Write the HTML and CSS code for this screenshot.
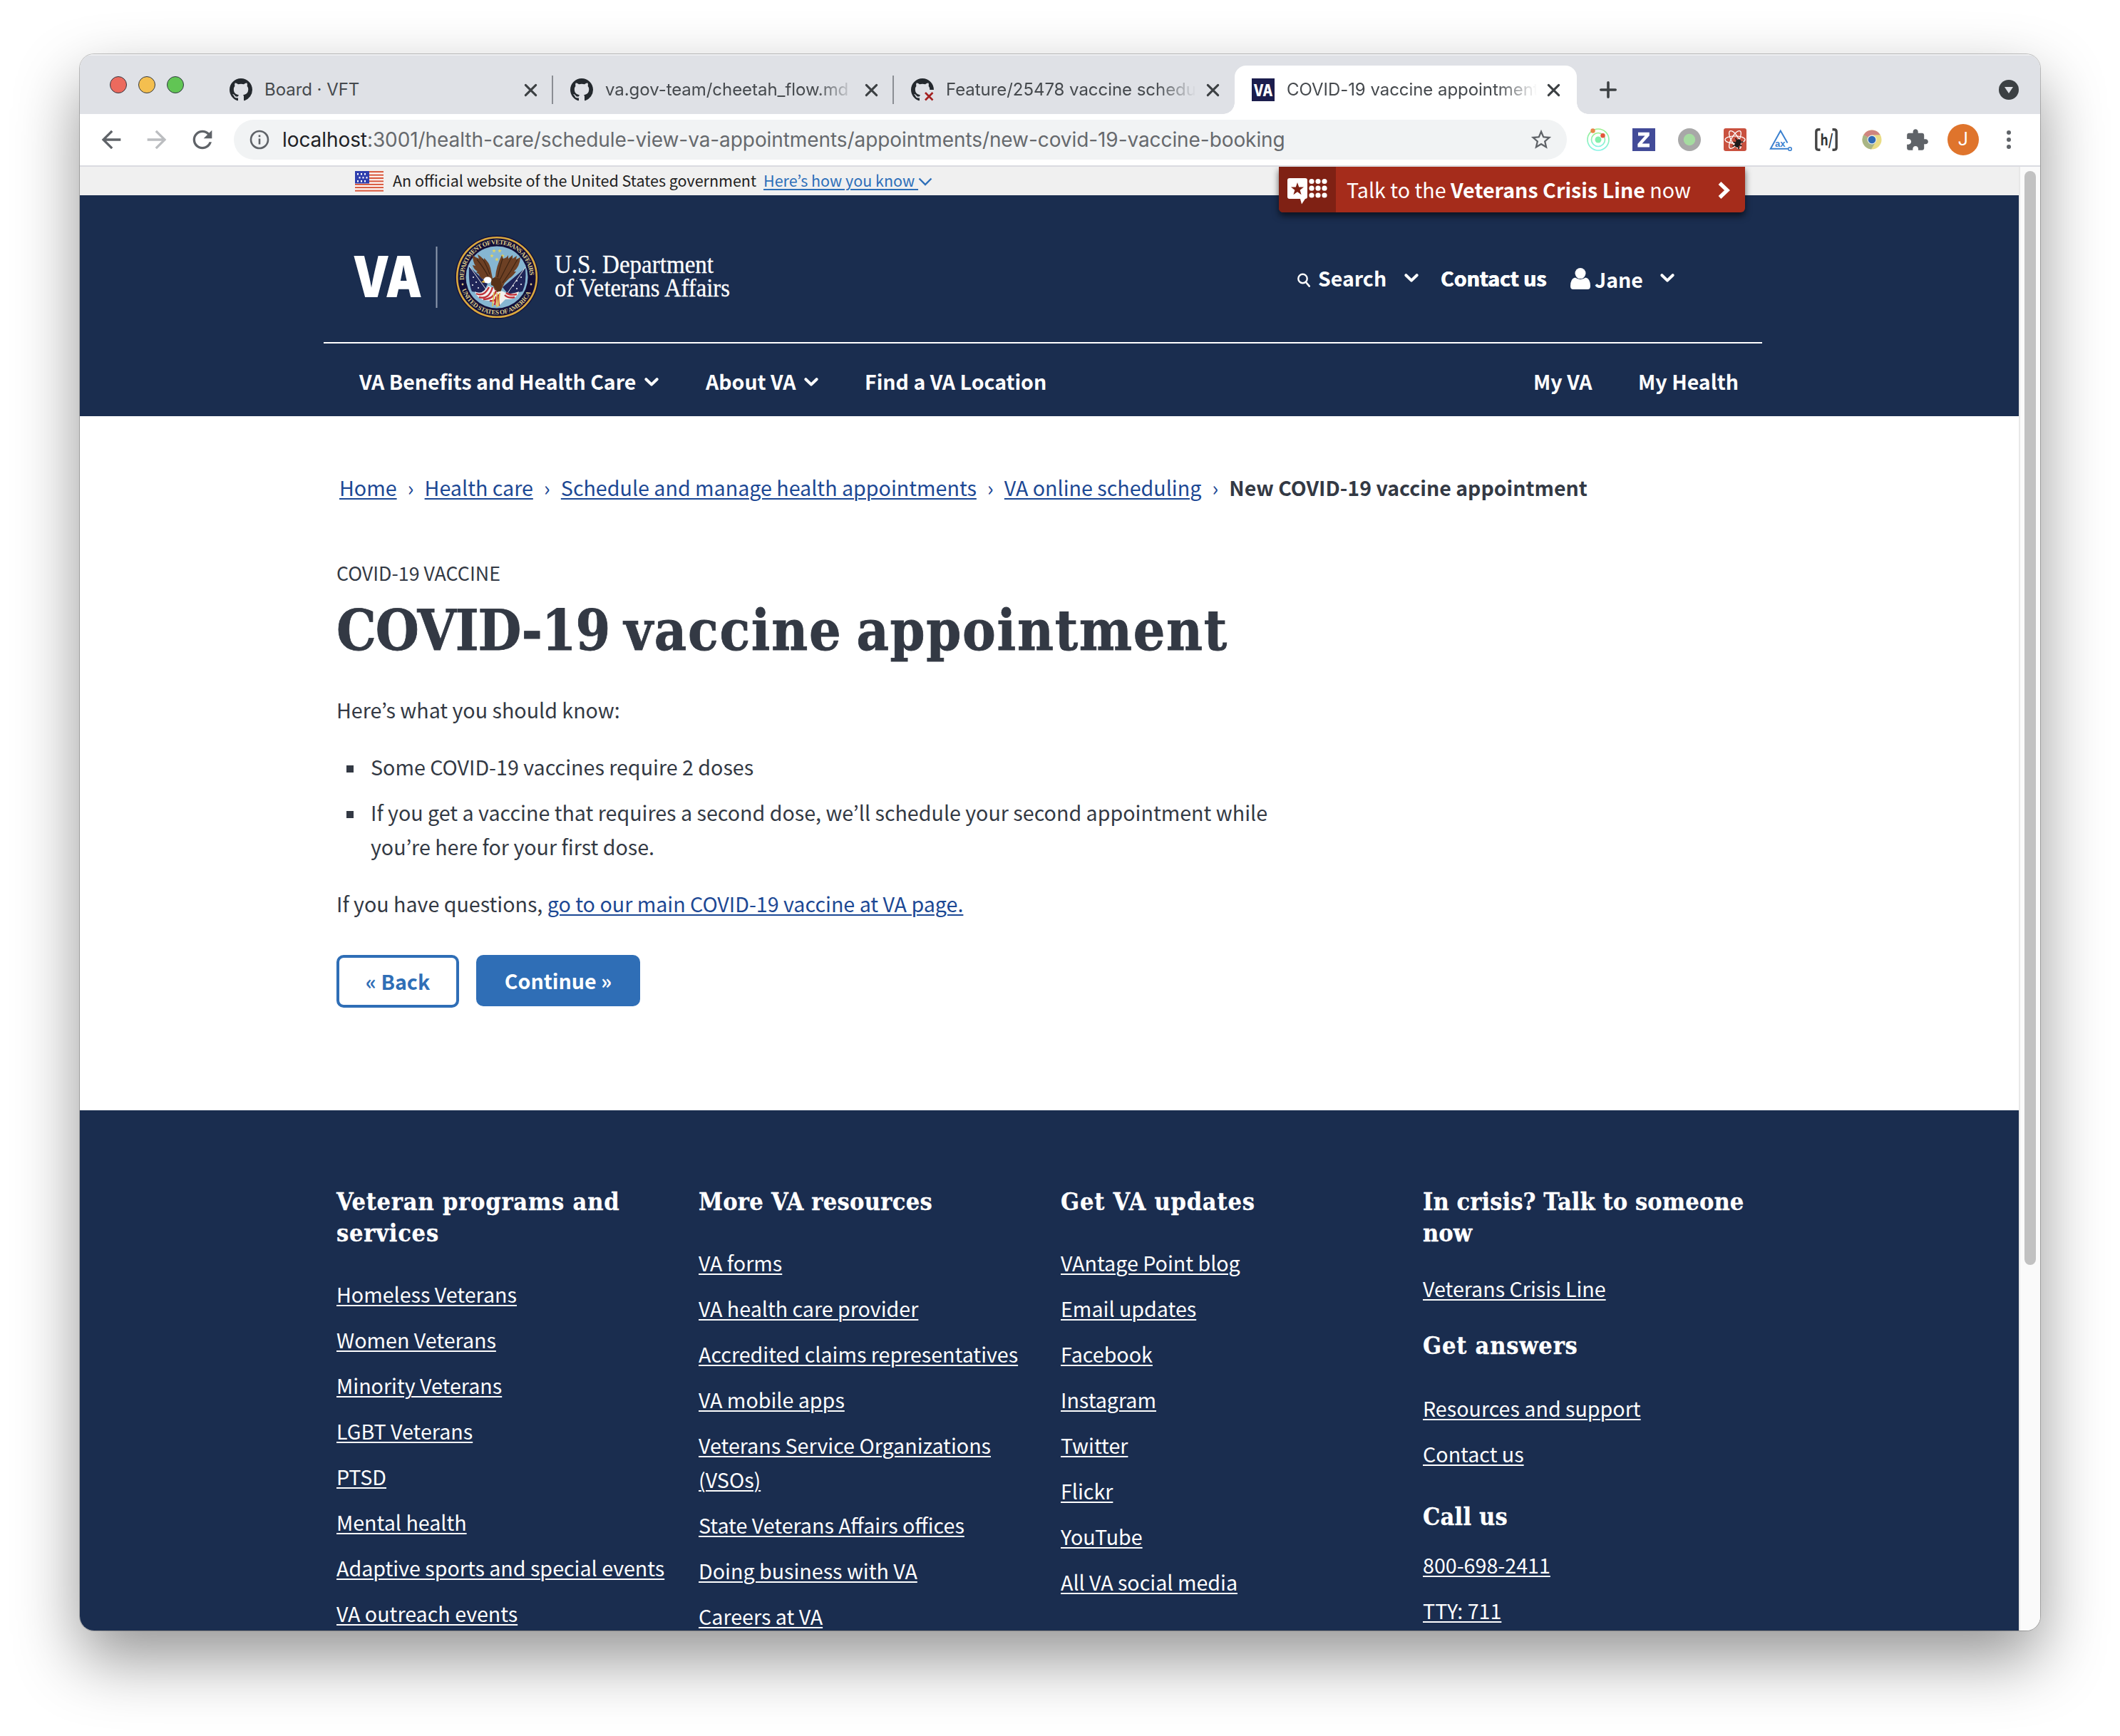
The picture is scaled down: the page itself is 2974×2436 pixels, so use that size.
FILE: index.html
```
<!DOCTYPE html>
<html lang="en">
<head>
<meta charset="utf-8">
<title>COVID-19 vaccine appointment</title>
<link rel="stylesheet" href="styles.css">
</head>
<body>
<svg width="0" height="0" class="defs" aria-hidden="true">
  <defs>
    <symbol id="github" viewBox="0 0 16 16"><path fill="#24292e" d="M8 0C3.58 0 0 3.58 0 8c0 3.54 2.29 6.53 5.47 7.59.4.07.55-.17.55-.38 0-.19-.01-.82-.01-1.49-2.01.37-2.53-.49-2.69-.94-.09-.23-.48-.94-.82-1.13-.28-.15-.68-.52-.01-.53.63-.01 1.08.58 1.23.82.72 1.21 1.87.87 2.33.66.07-.52.28-.87.51-1.07-1.78-.2-3.64-.89-3.64-3.95 0-.87.31-1.59.82-2.15-.08-.2-.36-1.02.08-2.12 0 0 .67-.21 2.2.82.64-.18 1.32-.27 2-.27s1.36.09 2 .27c1.53-1.04 2.2-.82 2.2-.82.44 1.1.16 1.92.08 2.12.51.56.82 1.27.82 2.15 0 3.07-1.87 3.75-3.65 3.95.29.25.54.73.54 1.48 0 1.07-.01 1.93-.01 2.2 0 .21.15.46.55.38A8.01 8.01 0 0 0 16 8c0-4.42-3.58-8-8-8z"/></symbol>
    <symbol id="close" viewBox="0 0 24 24"><path d="M4.5 4.5l15 15M19.500 4.500l-15 15" stroke="#3c4043" stroke-width="3.2" stroke-linecap="round" fill="none"/></symbol>
    <symbol id="chev" viewBox="0 0 20 14"><path d="M2.400 3.200L10 10.600 17.600 3.200" stroke="#fff" stroke-width="4" stroke-linecap="round" stroke-linejoin="round" fill="none"/></symbol>
    <symbol id="star" viewBox="-10 -10 20 20"><path d="M0-10L2.350-3.240 9.510-3.090 3.800 1.240 5.880 8.090 0 4 -5.880 8.090 -3.800 1.240 -9.510-3.090 -2.350-3.240z"/></symbol>
  </defs>
</svg>

<div class="window">
  <div class="tabs">
    <div class="lights"><i class="red"></i><i class="amber"></i><i class="green"></i></div>
    <div class="tab"><svg class="fav"><use href="#github"/></svg><span class="tab-title">Board · VFT</span><svg class="x"><use href="#close"/></svg><b class="sep"></b></div>
    <div class="tab"><svg class="fav"><use href="#github"/></svg><span class="tab-title fade">va.gov-team/cheetah_flow.md</span><svg class="x"><use href="#close"/></svg><b class="sep"></b></div>
    <div class="tab"><svg class="fav" viewBox="0 0 32 32"><use href="#github" width="32" height="32"/><path fill="#dfe1e6" d="M17 16h15v16H17z"/><path d="M20 20l10.500 10.500M30.500 20L20 30.500" stroke="#a32020" stroke-width="2.600"/></svg><span class="tab-title fade">Feature/25478 vaccine schedu</span><svg class="x"><use href="#close"/></svg></div>
    <div class="tab active"><svg class="fav" viewBox="0 0 32 32"><rect width="32" height="32" fill="#1b1d4d"/><text x="2.500" y="24.500" class="fav-va" textLength="27" lengthAdjust="spacingAndGlyphs">VA</text></svg><span class="tab-title fade">COVID-19 vaccine appointment</span><svg class="x"><use href="#close"/></svg></div>
    <svg class="plus" viewBox="0 0 24 24"><path d="M12 1.800v20.400M1.800 12h20.400" stroke="#3c4043" stroke-width="3.600" stroke-linecap="round"/></svg>
    <svg class="tab-search" viewBox="0 0 28 28"><circle cx="14" cy="14" r="14" fill="#3c4043"/><path d="M8 10h12l-6 9z" fill="#dfe1e6"/></svg>
  </div>

  <div class="toolbar">
    <svg class="tool" viewBox="0 0 24 24"><path fill="#5f6368" d="M20 11H7.830l5.590-5.590L12 4l-8 8 8 8 1.410-1.410L7.830 13H20v-2z"/></svg>
    <svg class="tool" viewBox="0 0 24 24"><path fill="#bbbdc0" d="M4 13h12.170l-5.590 5.590L12 20l8-8-8-8-1.410 1.410L16.170 11H4v2z"/></svg>
    <svg class="tool" viewBox="0 0 24 24"><path fill="#5f6368" d="M17.650 6.350C16.200 4.900 14.210 4 12 4c-4.420 0-7.990 3.580-7.990 8s3.570 8 7.990 8c3.730 0 6.840-2.550 7.730-6h-2.080c-.82 2.330-3.040 4-5.650 4-3.310 0-6-2.690-6-6s2.690-6 6-6c1.660 0 3.140.69 4.220 1.780L13 11h7V4l-2.350 2.350z"/></svg>
    <div class="omnibox">
      <svg class="info" viewBox="0 0 28 28"><circle cx="14" cy="14" r="12" fill="none" stroke="#5f6368" stroke-width="2.600"/><path d="M12.700 12.500h2.600v8h-2.600zM12.700 7.500h2.600v2.800h-2.600z" fill="#5f6368"/></svg>
      <span class="url"><b>localhost</b>:3001/health-care/schedule-view-va-appointments/appointments/new-covid-19-vaccine-booking</span>
      <svg class="bookmark" viewBox="0 0 24 24"><path fill="#5f6368" d="M22 9.240l-7.190-.62L12 2 9.190 8.630 2 9.240l5.460 4.730L5.820 21 12 17.270 18.180 21l-1.630-7.030L22 9.240zM12 15.400l-3.760 2.270 1-4.280-3.320-2.880 4.380-.38L12 6.100l1.710 4.040 4.380.38-3.320 2.880 1 4.280L12 15.400z"/></svg>
    </div>
    <div class="exts">
      <svg viewBox="0 0 32 32"><defs><linearGradient id="ring" x1="0" y1="0" x2="0" y2="1"><stop offset="0" stop-color="#9af08a"/><stop offset="1" stop-color="#86f3e6"/></linearGradient></defs><circle cx="16" cy="16" r="15" fill="none" stroke="url(#ring)" stroke-width="1.700"/><circle cx="16" cy="16" r="9.500" fill="none" stroke="url(#ring)" stroke-width="1.700"/><circle cx="16" cy="16" r="4.500" fill="#84efac"/><circle cx="8.500" cy="3.500" r="3.200" fill="#e8874a"/><circle cx="22.500" cy="10.200" r="3.200" fill="#e2573a"/></svg>
      <svg viewBox="0 0 32 32"><rect width="32" height="32" fill="#424b98"/><path d="M8 5.800h15.800v4.400L13.600 21.600H24v4.800H7.400v-4.400L17.600 10.600H8z" fill="#fff"/></svg>
      <svg viewBox="0 0 32 32"><circle cx="16" cy="16" r="16" fill="#a8a8a8"/><circle cx="16" cy="16" r="8.200" fill="#a5dca0"/></svg>
      <svg viewBox="0 0 32 32"><rect width="32" height="32" rx="3" fill="#c9513f"/><g fill="none" stroke="#fff" stroke-width="1.300"><ellipse cx="16" cy="16" rx="14" ry="5.200"/><ellipse cx="16" cy="16" rx="14" ry="5.200" transform="rotate(60 16 16)"/><ellipse cx="16" cy="16" rx="14" ry="5.200" transform="rotate(120 16 16)"/></g><g transform="rotate(25 20 21)"><ellipse cx="20" cy="21" rx="3.800" ry="6.200" fill="#1d1a1a"/><path d="M14 16l4 3M26 16l-4 3M13.500 22h13M15 28l4-4M25 28l-4-4" stroke="#1d1a1a" stroke-width="1.600"/></g></svg>
      <svg viewBox="0 0 32 32"><path d="M25.500 20.500L15.800 3.500 1.800 28.700h24.500" fill="none" stroke="#3a80cf" stroke-width="2"/><circle cx="29" cy="29" r="2.300" fill="none" stroke="#3a80cf" stroke-width="1.600"/><text x="8" y="25.600" class="ext-ax">ax</text></svg>
      <svg viewBox="0 0 32 32"><path d="M7.500 1.800H5Q1.800 1.800 1.800 5v22q0 3.200 3.200 3.200h2.500M24.500 1.800H27q3.200 0 3.200 3.200v22q0 3.200-3.200 3.200h-2.500" fill="none" stroke="#444" stroke-width="3.400"/><text x="7.500" y="23.500" class="ext-h" textLength="18" lengthAdjust="spacingAndGlyphs">h/</text></svg>
      <svg viewBox="0 0 32 32"><circle cx="16" cy="16" r="13.500" fill="#e9dc84"/><path d="M16 16L4.300 9.200A13.500 13.500 0 0 1 27.700 9.200L16 9.500z" fill="#cf8580"/><path d="M16 16L4.300 9.200A13.500 13.500 0 0 0 15 29.500L21.500 19z" fill="#a9b585"/><circle cx="16" cy="16" r="6.500" fill="#e8ecf0"/><circle cx="16" cy="16" r="5.300" fill="#2e6ab5"/></svg>
      <svg viewBox="1.200 .2 22.600 22.600"><path fill="#5f6368" d="M20.500 11H19V7c0-1.100-.9-2-2-2h-4V3.500C13 2.120 11.880 1 10.500 1S8 2.120 8 3.500V5H4c-1.100 0-1.990.9-1.990 2v3.800H3.500c1.490 0 2.700 1.210 2.700 2.700s-1.210 2.700-2.700 2.700H2V20c0 1.100.9 2 2 2h3.800v-1.500c0-1.490 1.210-2.700 2.700-2.700 1.490 0 2.700 1.210 2.700 2.700V22H17c1.100 0 2-.9 2-2v-4h1.500c1.380 0 2.500-1.120 2.500-2.500S21.880 11 20.500 11z"/></svg>
      <span class="avatar">J</span>
      <svg viewBox="0 0 32 32"><g fill="#5f6368"><circle cx="16" cy="6" r="3"/><circle cx="16" cy="16" r="3"/><circle cx="16" cy="26" r="3"/></g></svg>
    </div>
  </div>

  <div class="viewport">
    <div class="page">
      <div class="gov">
        <svg class="flag" viewBox="0 0 40 29"><rect width="40" height="29" fill="#fff"/><path d="M0 1.200h40M0 5.600h40M0 10h40M0 14.400h40M0 18.800h40M0 23.200h40M0 27.600h40" stroke="#d95f45" stroke-width="2.300"/><rect width="20" height="17.500" fill="#2f3fae"/><g fill="#fff"><path d="M3 3h2v2.500H3zM8 3h2v2.500H8zM13 3h2v2.500h-2zM5.500 8h2v2.500h-2zM10.500 8h2v2.500h-2zM15.500 8h2v2.500h-2zM3 13h2v2.500H3zM8 13h2v2.500H8zM13 13h2v2.500h-2z"/></g></svg>
        <span>An official website of the United States government</span>
        <a href="#">Here’s how you know </a>
        <svg class="gov-chev" viewBox="0 0 20 12"><path d="M1.500 1.500L10 10l8.500-8.500" fill="none" stroke="#2d6fb9" stroke-width="2.400"/></svg>
      </div>

      <header class="header">
        <div class="brand-row">
          <svg class="logo" viewBox="0 0 534 126">
            <text class="logo-va" x="-3" y="90.500" textLength="97" lengthAdjust="spacingAndGlyphs">VA</text>
            <path d="M114.500 20v86" stroke="#8f9bb0" stroke-width="2"/>
            <g transform="translate(199 63)">
              <circle r="58.500" fill="#130f38"/>
              <circle r="55.800" fill="none" stroke="#d9a83e" stroke-width="2.600"/>
              <circle r="43.500" fill="#86b6d2"/>
              <path id="arc-top" d="M-46 4A46.200 46.200 0 1 1 46 4" fill="none"/>
              <path id="arc-bottom" d="M-49.200 17.500A52.200 52.200 0 0 0 49.200 17.500" fill="none"/>
              <text class="seal-text"><textPath href="#arc-top" textLength="147">DEPARTMENT OF VETERANS AFFAIRS</textPath></text>
              <text class="seal-text"><textPath href="#arc-bottom" textLength="124">UNITED STATES OF AMERICA</textPath></text>
              <circle cx="-48" cy="10" r="1.400" fill="#d9c27a"/><circle cx="48" cy="10" r="1.400" fill="#d9c27a"/>
              <g fill="#e6d45c"><use href="#star" x="-7" y="-40" width="6" height="6"/><use href="#star" x="1" y="-40" width="6" height="6"/><use href="#star" x="-10" y="-33" width="6" height="6"/><use href="#star" x="5" y="-33" width="6" height="6"/><use href="#star" x="-3" y="-28" width="6" height="6"/></g>
              <path d="M-39-15l26 24-6 14-16-3q-5-10-4-35z" fill="#1f2558"/>
              <path d="M40-13L8 14l8 10 20-4q6-12 4-33z" fill="#1f2558"/>
              <path d="M-39-16L0 38M40-14L4 38" stroke="#e4e4e4" stroke-width="1"/>
              <g fill="#fff"><circle cx="-33" cy="0" r="1"/><circle cx="-29" cy="7" r="1"/><circle cx="-34" cy="11" r="1"/><circle cx="-26" cy="15" r="1"/><circle cx="34" cy="0" r="1"/><circle cx="28" cy="5" r="1"/><circle cx="34" cy="10" r="1"/><circle cx="23" cy="12" r="1"/><circle cx="28" cy="16" r="1"/></g>
              <path d="M-31 20q10 6 19-8l13 6 8 2q8 6 22 0-3 12-19 11l-10 10-12-8q-16 0-21-13z" fill="#f2efec"/>
              <path d="M-29 23q11 5 18-9M-25 28q14 4 19-14M-19 31q14 0 18-12M-10 33q9 2 13-9M28 24q-10 2-15-2M25 28q-9 2-14-3M-3 39l2-12M3 40l-1-12" fill="none" stroke="#c0323a" stroke-width="2.400"/>
              <path d="M-34-31q5 4 9 5l-2-6q7 4 9 9l0-4q7 6 9 14l3 15-9 2q-10-3-10-8l-4-3 2-1q-6-4-7-9l4 1q-4-6-4-15z" fill="#6d4024"/>
              <path d="M7-31l2 5q5-1 7-5l0 5 6-5 0 5 6-4-1 5 6-3q-1 13-9 20l3 0q-5 7-10 10l-6 6-6 12-8-2-5-14 6-5q1-14 9-30z" fill="#6d4024"/>
              <path d="M-28-25q10 12 16 24M-20-26q7 12 10 22M8-26Q4-14 1 0M20-27Q12-12 4 4M29-25Q20-8 8 8" stroke="#3f2412" stroke-width="1.200" fill="none"/>
              <path d="M-8 3q5-4 12-1 4 7 2 17l-6 2q-2-9-8-10z" fill="#573218"/>
              <ellipse cx="-13" cy="4" rx="5.500" ry="4.500" fill="#fff"/><path d="M-18 4l-4 3 5 1z" fill="#e3b73c"/>
              <path d="M-4 21l-2 20M0 22v20M4 22l-2 19" stroke="#e0c04a" stroke-width="1.600"/>
            </g>
            <text class="logo-name" x="280" y="57" textLength="223" lengthAdjust="spacingAndGlyphs">U.S. Department</text>
            <text class="logo-name" x="280" y="90" textLength="246" lengthAdjust="spacingAndGlyphs">of Veterans Affairs</text>
          </svg>
          <div class="util">
            <div class="util-search"><svg class="mag" viewBox="0 0 18 20"><circle cx="7.500" cy="8" r="6.200" fill="none" stroke="#fff" stroke-width="2.400"/><path d="M12 13l4.800 5.600" stroke="#fff" stroke-width="2.600" stroke-linecap="round"/></svg><span>Search</span><svg class="chev"><use href="#chev"/></svg></div>
            <div class="util-contact">Contact us</div>
            <div class="util-user"><svg class="person" viewBox="0 0 28 30"><circle cx="14" cy="7.600" r="7.500" fill="#fff"/><path d="M6.500 13.500q7.500 4.800 15 0Q28 15 28 25.500q0 4.500-4 4.500H4q-4 0-4-4.500 0-10.500 6.500-12z" fill="#fff"/></svg><span>Jane</span><svg class="chev"><use href="#chev"/></svg></div>
          </div>
        </div>
        <nav class="nav">
          <a class="n1">VA Benefits and Health Care<svg class="chev"><use href="#chev"/></svg></a>
          <a class="n2">About VA<svg class="chev"><use href="#chev"/></svg></a>
          <a class="n3">Find a VA Location</a>
          <a class="n4">My VA</a>
          <a class="n5">My Health</a>
        </nav>
      </header>

      <a class="crisis" href="#">
        <span class="crisis-icon"><svg viewBox="0 0 56 38"><path d="M3 0h22q3 0 3 3v23q0 3-3 3l-5 7.500L18 29H3q-3 0-3-3V3q0-3 3-3z" fill="#fff"/><path transform="translate(14 15.500) scale(.95)" fill="#7f2114" d="M0-10L2.350-3.240 9.510-3.090 3.800 1.240 5.880 8.090 0 4 -5.880 8.090 -3.800 1.240 -9.510-3.090 -2.350-3.240z"/><g fill="#fff"><circle cx="34" cy="4.500" r="3.600"/><circle cx="43" cy="4.500" r="3.600"/><circle cx="52" cy="4.500" r="3.600"/><circle cx="34" cy="14.200" r="3.600"/><circle cx="43" cy="14.200" r="3.600"/><circle cx="52" cy="14.200" r="3.600"/><circle cx="34" cy="24" r="3.600"/><circle cx="43" cy="24" r="3.600"/><circle cx="52" cy="24" r="3.600"/></g></svg></span>
        <span class="crisis-text">Talk to the <b>Veterans Crisis Line</b> now</span>
        <svg class="crisis-arrow" viewBox="0 0 18 26"><path d="M3.500 3L14 13 3.500 23" fill="none" stroke="#fff" stroke-width="5.400"/></svg>
      </a>

      <main class="main">
        <div class="crumbs">
          <a href="#">Home</a><i>›</i><a href="#">Health care</a><i>›</i><a href="#">Schedule and manage health appointments</a><i>›</i><a href="#">VA online scheduling</a><i>›</i><b>New COVID-19 vaccine appointment</b>
        </div>
        <div class="eyebrow">COVID-19 VACCINE</div>
        <h1><span class="tight">COVID-19</span> vaccine appointment</h1>
        <p class="know">Here’s what you should know:</p>
        <ul>
          <li><span>Some COVID-19 vaccines require 2 doses</span></li>
          <li><span>If you get a vaccine that requires a second dose, we’ll schedule your second appointment while<br>you’re here for your first dose.</span></li>
        </ul>
        <p class="questions">If you have questions, <a href="#">go to our main COVID-19 vaccine at VA page.</a></p>
        <div class="buttons"><button class="back">« Back</button><button class="continue">Continue »</button></div>
      </main>

      <footer class="footer">
        <div class="col">
          <h2>Veteran programs and<br>services</h2>
          <a href="#">Homeless Veterans</a><a href="#">Women Veterans</a><a href="#">Minority Veterans</a><a href="#">LGBT Veterans</a><a href="#">PTSD</a><a href="#">Mental health</a><a href="#">Adaptive sports and special events</a><a href="#">VA outreach events</a>
        </div>
        <div class="col">
          <h2 class="resources-h">More VA resources</h2>
          <a href="#">VA forms</a><a href="#">VA health care provider</a><a href="#">Accredited claims representatives</a><a href="#">VA mobile apps</a><a href="#">Veterans Service Organizations<br>(VSOs)</a><a href="#">State Veterans Affairs offices</a><a href="#">Doing business with VA</a><a href="#">Careers at VA</a>
        </div>
        <div class="col">
          <h2>Get VA updates</h2>
          <a href="#">VAntage Point blog</a><a href="#">Email updates</a><a href="#">Facebook</a><a href="#">Instagram</a><a href="#">Twitter</a><a href="#">Flickr</a><a href="#">YouTube</a><a href="#">All VA social media</a>
        </div>
        <div class="col">
          <h2 class="crisis-h">In crisis? Talk to someone<br>now</h2>
          <a href="#">Veterans Crisis Line</a>
          <h2 class="answers-h">Get answers</h2>
          <a href="#">Resources and support</a><a href="#">Contact us</a>
          <h2 class="call-h">Call us</h2>
          <a href="#">800-698-2411</a><a href="#">TTY: 711</a>
        </div>
      </footer>
    </div>
    <div class="scrollbar"><div class="thumb"></div></div>
  </div>
</div>
</body>
</html>
```
FILE: styles.css
```
* { box-sizing: border-box; }
body {
  margin: 0;
  width: 2974px;
  height: 2436px;
  overflow: hidden;
  background: #fff;
  padding: 76px 112px 0;
  font: 400 28.65px/48px "Noto Sans CJK KR", "Noto Sans", sans-serif;
  color: #333944;
}
.defs { display: block; position: absolute; }
svg { display: block; flex: none; overflow: visible; }
a { color: inherit; }
h1, h2, p, ul { margin: 0; padding: 0; }
i { font-style: normal; }

.window {
  display: flex;
  flex-direction: column;
  width: 2750px;
  height: 2212px;
  border-radius: 20px;
  overflow: hidden;
  background: #fff;
  box-shadow: 0 0 0 1px rgba(0,0,0,.22), 0 40px 90px rgba(0,0,0,.42);
}

/* tab strip */
.tabs {
  display: flex;
  align-items: flex-end;
  flex: none;
  height: 84px;
  background: #dfe1e6;
  box-shadow: inset 0 2px 0 #eeeff1;
}
.lights { display: flex; gap: 16px; margin: 31px 40px 29px 42px; align-self: flex-start; }
.lights i { width: 24px; height: 24px; border-radius: 50%; border: 1px solid; }
.red { background: #ec6a5e; border-color: #d5564b; }
.amber { background: #f4bf4f; border-color: #d9a33c; }
.green { background: #61c554; border-color: #4ca73f; }
.tab { display: flex; align-items: center; flex: none; width: 478px; height: 68px; padding-left: 24px; position: relative; }
.fav { width: 32px; height: 32px; }
.fav-va { font: 800 23px Inter, sans-serif; fill: #fff; }
.tab-title {
  width: 351px;
  margin: 0 12px 0 17px;
  overflow: hidden;
  white-space: nowrap;
  font: 400 24px/40px Inter, sans-serif;
  letter-spacing: -.05px;
  color: #45494d;
}
.fade { -webkit-mask-image: linear-gradient(90deg, #000 295px, transparent 351px); mask-image: linear-gradient(90deg, #000 295px, transparent 351px); }
.x { width: 23px; height: 23px; margin-right: 1px; }
.sep { width: 2px; height: 40px; margin-left: 17px; background: #8b8e94; }
.active { width: 480px; background: #fff; border-radius: 16px 16px 0 0; }
.active::before, .active::after { content: ""; position: absolute; bottom: 0; width: 16px; height: 16px; }
.active::before { left: -16px; background: radial-gradient(circle at 0 0, transparent 15.5px, #fff 16px); }
.active::after { right: -16px; background: radial-gradient(circle at 100% 0, transparent 15.5px, #fff 16px); }
.plus { width: 24px; height: 24px; margin: 0 0 22px 32px; }
.tab-search { width: 28px; height: 28px; margin: 0 30px 20px auto; }

/* toolbar */
.toolbar { display: flex; align-items: center; gap: 24px; flex: none; height: 74px; padding-left: 24px; border-bottom: 2px solid #dadbe1; }
.tool { width: 40px; height: 40px; }
.omnibox { display: flex; align-items: center; flex: none; width: 1870px; height: 56px; padding: 0 19px 0 22px; border-radius: 28px; background: #f1f3f4; }
.info { width: 28px; height: 28px; }
.url { flex: 1; margin-left: 18px; font: 400 28px/56px Inter, sans-serif; letter-spacing: -.08px; color: #66696d; white-space: nowrap; }
.url b { font-weight: 400; color: #202124; }
.bookmark { width: 34px; height: 34px; }
.exts { display: flex; align-items: center; gap: 32px; margin-left: 4px; }
.exts svg { width: 32px; height: 32px; }
.ext-ax { font: 700 13px "Liberation Sans", sans-serif; fill: #3a80cf; }
.ext-h { font: 700 21px "Noto Sans CJK KR", sans-serif; fill: #333; }
.avatar { width: 44px; height: 44px; margin: 0 -6px; border-radius: 50%; background: #df742c; color: #fff; font: 400 25px/44px Roboto, sans-serif; text-align: center; }

.viewport { display: flex; flex: 1; min-height: 0; }
.page { position: relative; flex: none; width: 2720px; overflow: hidden; }
.scrollbar { width: 30px; border-left: 2px solid #e8e8e8; background: #fafafa; padding: 6px 0 0 6px; }
.thumb { width: 16px; height: 1535px; border-radius: 8px; background: #c1c1c1; }

/* government banner */
.gov { display: flex; height: 40px; padding-left: 386px; background: #f0f0f0; color: #212121; font-size: 21.500px; line-height: 37px; white-space: pre; }
.gov span { width: 508px; margin: 0 12px 0 13px; }
.gov a { width: 217px; color: #2d6fb9; text-underline-offset: 3px; text-decoration-thickness: 2px; }
.flag { width: 40px; height: 29px; margin-top: 6px; }
.gov-chev { width: 20px; height: 12px; margin-top: 15px; }

/* site header */
.header { height: 310px; padding: 0 360px 0 342px; background: #1a2d4f; color: #fff; font-size: 28.5px; font-weight: 700; }
.brand-row { display: flex; height: 208px; padding-left: 44px; border-bottom: 2px solid #fff; }
.logo { width: 534px; height: 126px; margin-top: 52px; }
.logo-va { font: 900 80px Inter, sans-serif; fill: #fff; }
.logo-name { font: 400 35.500px "Liberation Serif", serif; fill: #fff; stroke: #fff; stroke-width: .3px; }
.seal-text { font: 700 9px "Liberation Serif", serif; fill: #dccb8c; }
.util { display: flex; margin: 92px 0 0 788px; }
.util > div { display: flex; white-space: nowrap; }
.util-search { width: 201px; }
.util-search span { width: 95px; margin-left: 11px; }
.mag { width: 18px; height: 20px; margin-top: 17px; }
.chev { width: 20px; height: 14px; margin: 17px 0 0 26px; }
.util-contact { width: 182px; text-shadow: .6px 0 0 #fff, -.3px 0 0 #fff; }
.person { width: 28px; height: 30px; margin-top: 10px; }
.util-user span { width: 66px; margin: 2px 0 0 6px; }
.nav { display: flex; padding: 29px 0 0 50px; white-space: nowrap; }
.nav a { display: flex; }
.nav .chev { margin-left: 12px; margin-top: 18px; }
.n1 { width: 486px; }
.n2 { width: 223px; }
.n3 { width: 938px; }
.n4 { width: 147px; }

/* crisis line button, hangs over the banner and the header */
.crisis { position: absolute; left: 1682px; top: 0; display: flex; width: 654px; height: 64px; border-radius: 0 0 6px 6px; overflow: visible; background: #a52c1b; color: #fff; text-decoration: none; line-height: 63px; box-shadow: 0 5px 10px rgba(0,0,0,.6); }
.crisis-icon { width: 80px; padding: 16px 0 0 12px; background: #7f2114; border-radius: 0 0 0 6px; }
.crisis-icon svg { width: 56px; height: 38px; }
.crisis-text { width: 481px; margin: 0 38px 0 15px; white-space: nowrap; }
.crisis-arrow { width: 18px; height: 26px; margin: 20px 0 0 1px; }

/* content */
.main { height: 974px; padding: 76px 0 0 360px; }
.main a { color: #1c4894; }
.main a, .col a { text-underline-offset: 3px; text-decoration-thickness: 2px; }
.crumbs { display: flex; padding-left: 4px; white-space: nowrap; }
.crumbs i { width: 39px; text-align: center; color: #1c4894; }
.crumbs b { font-size: 28.5px; }
.eyebrow { margin-top: 72px; font-size: 26.800px; }
h1 { margin-top: 7px; font: 700 78px/100px "DejaVu Serif Condensed", "DejaVu Serif", serif; letter-spacing: 1.7px; word-spacing: -6px; -webkit-text-stroke: .8px #333944; white-space: nowrap; }
.tight { letter-spacing: -1.1px; }
.know { margin-top: 37px; }
ul { margin-top: 32px; list-style: none; }
li { display: flex; margin-bottom: 16px; }
li::before { content: ""; width: 10px; height: 10px; margin: 22px 24px 0 14px; background: #333944; flex: none; }
.questions { margin-top: 32px; }
.buttons { display: flex; align-items: flex-start; gap: 24px; margin-top: 48px; }
button { height: 72px; padding: 0; border: 0; border-radius: 10px; font: 700 28.600px/72px "Noto Sans CJK KR", sans-serif; color: #fff; background: #2f6eb6; }
.back { width: 172px; height: 74px; border: 4px solid #2f6eb6; line-height: 64px; background: #fff; color: #2f6eb6; }
.continue { width: 230px; }

/* footer */
.footer { display: grid; grid-template-columns: repeat(4, 476px); gap: 32px; height: 730px; padding: 106px 0 0 360px; background: #1a2d4f; color: #fff; }
.col { display: flex; flex-direction: column; align-items: flex-start; white-space: nowrap; }
.col a { margin-bottom: 16px; }
h2 { margin-bottom: 40px; font: 700 34px/44px "DejaVu Serif Condensed", "DejaVu Serif", serif; letter-spacing: .8px; -webkit-text-stroke: .3px #fff; }
.resources-h { letter-spacing: .3px; }
.crisis-h { margin-bottom: 32px; letter-spacing: .1px; }
.answers-h { margin: 18px 0 42px; }
.call-h { margin: 26px 0 22px; letter-spacing: .2px; }
```
